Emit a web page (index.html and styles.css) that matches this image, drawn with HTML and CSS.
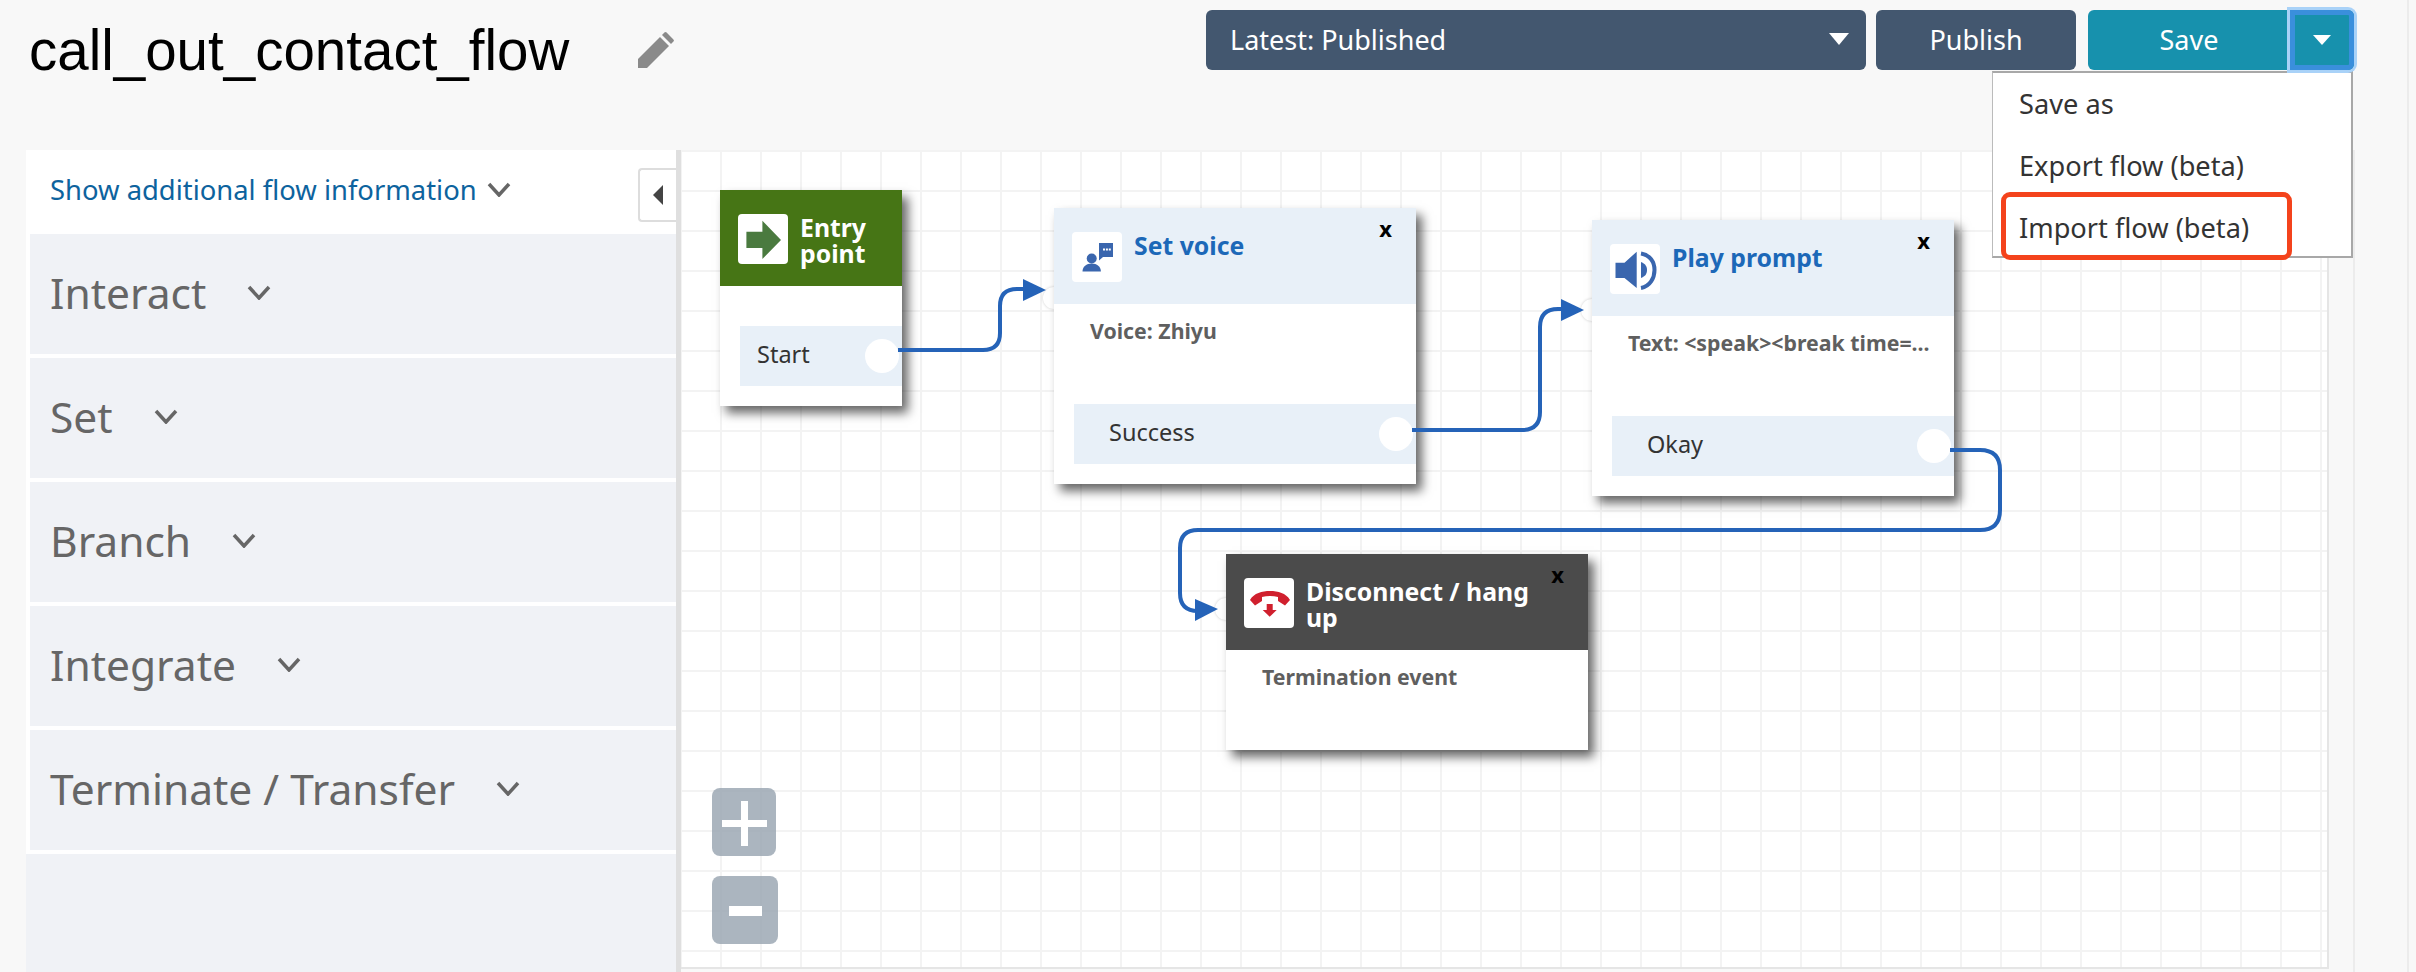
FILE: index.html
```html
<!DOCTYPE html>
<html lang="en">
<head>
    <meta charset="UTF-8">
    <title>call_out_contact_flow</title>
    <link rel="stylesheet" href="styles.css">
</head>
<body>
    <div class="page">
        <header class="topbar">
            <div class="flow-name">
                <h1>call_out_contact_flow</h1>
                <svg class="pencil" width="36" height="36" viewBox="0 0 36 36"><path d="M0 36V27L22 5l9 9L9 36z"/><path d="M24 3l2.400-2.400a1.600 1.600 0 0 1 2.200 0l6.800 6.800a1.600 1.600 0 0 1 0 2.200L33 12z"/></svg>
            </div>
            <div class="actions">
                <button class="btn btn-version"><span>Latest: Published</span><i class="caret"></i></button>
                <button class="btn btn-publish">Publish</button>
                <div class="save-group">
                    <button class="btn btn-save">Save</button>
                    <button class="btn btn-save-caret"><i class="caret caret-small"></i></button>
                    <ul class="save-menu">
                        <li>Save as</li>
                        <li>Export flow (beta)</li>
                        <li class="marked">Import flow (beta)</li>
                    </ul>
                </div>
            </div>
        </header>

        <main class="workspace">
            <aside class="sidebar">
                <div class="info-row">
                    <a class="info-link">Show additional flow information</a>
                    <svg class="chevron" width="24" height="15" viewBox="0 0 24 15"><path d="M2 2l10 11L22 2"/></svg>
                    <button class="collapse"><i></i></button>
                </div>
                <div class="group"><span>Interact</span><svg class="chevron" width="24" height="15" viewBox="0 0 24 15"><path d="M2 2l10 11L22 2"/></svg></div>
                <div class="group"><span>Set</span><svg class="chevron" width="24" height="15" viewBox="0 0 24 15"><path d="M2 2l10 11L22 2"/></svg></div>
                <div class="group"><span>Branch</span><svg class="chevron" width="24" height="15" viewBox="0 0 24 15"><path d="M2 2l10 11L22 2"/></svg></div>
                <div class="group"><span>Integrate</span><svg class="chevron" width="24" height="15" viewBox="0 0 24 15"><path d="M2 2l10 11L22 2"/></svg></div>
                <div class="group"><span>Terminate / Transfer</span><svg class="chevron" width="24" height="15" viewBox="0 0 24 15"><path d="M2 2l10 11L22 2"/></svg></div>
            </aside>

            <section class="canvas">
                <!-- entry point -->
                <div class="node node-entry">
                    <div class="node-head head-green">
                        <div class="node-icon">
                            <svg width="50" height="50" viewBox="0 0 50 50"><path fill="#4a7a3f" d="M8.400 17.700h16v-11L43 26 24.400 45V34h-16z"/></svg>
                        </div>
                        <div class="node-title">Entry point</div>
                    </div>
                    <div class="entry-body">
                        <div class="branch branch-start">Start<i class="port"></i></div>
                    </div>
                </div>

                <!-- set voice -->
                <div class="node node-voice">
                    <i class="port-in"></i>
                    <span class="node-close">x</span>
                    <div class="node-head">
                        <div class="node-icon">
                            <svg width="50" height="50" viewBox="0 0 50 50" fill="#3a66ae"><circle cx="19.700" cy="26.500" r="5"/><path d="M10.500 39.500c0-5 4-8 9.200-8s9.200 3 9.200 8z"/><path d="M27 11h14v14H31l-4 3.500z"/><path fill="#fff" d="M31 16.500h2v2h-2zM33.900 16.500h2v2h-2zM36.800 16.500h2v2h-2z"/></svg>
                        </div>
                        <div class="node-title">Set voice</div>
                    </div>
                    <div class="node-text">Voice: Zhiyu</div>
                    <div class="branch">Success<i class="port"></i></div>
                </div>

                <!-- play prompt -->
                <div class="node node-prompt">
                    <i class="port-in"></i>
                    <span class="node-close">x</span>
                    <div class="node-head">
                        <div class="node-icon">
                            <svg width="50" height="50" viewBox="0 0 50 50" fill="#3a66ae"><path d="M5.500 18.700h9L26.700 7.700V44L14.500 34h-9z"/><path d="M31 18c5 2 6 5 6 8s-1 6-6 8z"/><path fill="none" stroke="#3a66ae" stroke-width="4" d="M31 9.500c9 1.500 13.500 8.500 13.500 16.500S40 42.500 31 44"/></svg>
                        </div>
                        <div class="node-title">Play prompt</div>
                    </div>
                    <div class="node-text">Text: &lt;speak&gt;&lt;break time=...</div>
                    <div class="branch">Okay<i class="port"></i></div>
                </div>

                <!-- disconnect -->
                <div class="node node-end">
                    <i class="port-in"></i>
                    <span class="node-close">x</span>
                    <div class="node-head head-dark">
                        <div class="node-icon">
                            <svg width="50" height="50" viewBox="0 0 50 50" fill="#d0202e"><path d="M6 22c4-7 12-9 20-9s16 2 20 9l-5 5.500-7-4.500v-4c-5-1.500-11-1.500-16 0v4l-7 4.500z"/><path d="M22.700 26h6v6h4l-7 6.700-7-6.700h4z"/></svg>
                        </div>
                        <div class="node-title">Disconnect / hang up</div>
                    </div>
                    <div class="node-text">Termination event</div>
                </div>

                <svg class="wires" width="1648" height="817" viewBox="681 150 1648 817">
                    <g fill="none" stroke="#2563b8" stroke-width="4">
                        <path d="M898 350h85q17 0 17-17v-27q0-17 17-17h8"/>
                        <path d="M1412 430h110q18 0 18-18v-85q0-18 18-18h5"/>
                        <path d="M1950 450h30q20 0 20 20v40q0 20-20 20H1198q-18 0-18 18v45q0 18 18 18h2"/>
                    </g>
                    <g fill="#2563b8">
                        <path d="M1023 279l23 11-23 11z"/>
                        <path d="M1561 299l23 11-23 11z"/>
                        <path d="M1195 599l23 10-23 12z"/>
                    </g>
                </svg>

                <div class="zoom-tools">
                    <button class="zoom-btn zoom-in"></button>
                    <button class="zoom-btn zoom-out"></button>
                </div>
            </section>

            <div class="gutter"></div>
        </main>
    </div>
</body>
</html>
```

FILE: styles.css
```css
* {
    box-sizing: border-box;
}
html, body {
    margin: 0;
    height: 100%;
    overflow: hidden;
}
body {
    background-color: #f8f8f8;
    font-family: "Noto Sans", sans-serif;
}
.page {
    width: 2409px;
    height: 972px;
    border-right: 2px solid #ececec;
}

/* top bar */
.topbar {
    height: 150px;
    display: flex;
    justify-content: space-between;
    align-items: flex-start;
    padding-left: 29px;
}
.flow-name {
    display: flex;
    align-items: flex-start;
    gap: 69px;
    padding-top: 18px;
}
.flow-name h1 {
    margin: 0;
    font-family: "Liberation Sans", Arial, sans-serif;
    font-size: 56.500px;
    font-weight: 400;
    line-height: 66px;
    color: #000;
}
.pencil {
    margin-top: 14px;
    fill: #8a8a8a;
}
.actions {
    display: flex;
    margin-top: 10px;
    margin-right: 53px;
}
.btn {
    height: 60px;
    border: none;
    border-radius: 6px;
    color: #fff;
    font-family: inherit;
    font-size: 27px;
    padding: 0 0 2px;
}
.btn-version {
    width: 660px;
    background-color: #43576f;
    display: flex;
    justify-content: space-between;
    align-items: center;
    padding: 0 17px 2px 24px;
}
.btn-publish {
    width: 200px;
    margin-left: 10px;
    background-color: #43576f;
}
.caret {
    display: block;
    width: 0;
    height: 0;
    border-left: 10px solid transparent;
    border-right: 10px solid transparent;
    border-top: 12px solid #fff;
}
.caret-small {
    margin: 2px auto 0;
    border-left-width: 9px;
    border-right-width: 9px;
    border-top-width: 10px;
}
.save-group {
    position: relative;
    display: flex;
    margin-left: 12px;
}
.btn-save {
    width: 202px;
    background-color: #1791ad;
    border-radius: 6px 0 0 6px;
}
.btn-save-caret {
    position: relative;
    z-index: 6;
    width: 64px;
    background-color: #1791ad;
    border-radius: 0 6px 6px 0;
    box-shadow: inset 0 0 0 5px #3a8fdc, 0 0 0 3px #a9d2f8;
}
.save-menu {
    position: absolute;
    z-index: 5;
    top: 61px;
    right: 1px;
    width: 361px;
    height: 187px;
    margin: 0;
    padding: 0;
    list-style: none;
    background-color: #fff;
    border-top: 2px solid #a8a8a8;
    border-right: 2px solid #a8a8a8;
    border-bottom: 2px solid #a8a8a8;
    border-left: 1px solid #bbb;
}
.save-menu li {
    height: 62px;
    line-height: 62px;
    padding-left: 26px;
    font-size: 27.200px;
    color: #333;
}
.save-menu .marked {
    position: relative;
}
.save-menu .marked::after {
    content: "";
    box-sizing: border-box;
    position: absolute;
    left: 8px;
    top: -5px;
    width: 291px;
    height: 68px;
    border: 5px solid #f4431c;
    border-radius: 9px;
}

/* sidebar */
.workspace {
    display: flex;
    height: 817px;
}
.sidebar {
    flex: none;
    position: relative;
    margin-left: 26px;
    width: 655px;
    height: 822px;
    background-color: #f0f2f6;
    border-right: 5px solid #dfdfdf;
}
.info-row {
    height: 84px;
    display: flex;
    align-items: center;
    gap: 10px;
    padding: 0 0 6px 24px;
    background-color: #fff;
}
.info-link {
    color: #0d639e;
    font-size: 27.400px;
}
.chevron {
    flex: none;
    fill: none;
    stroke: #666;
    stroke-width: 3.500;
}
.collapse {
    position: absolute;
    top: 18px;
    right: 0;
    width: 38px;
    height: 54px;
    padding: 0;
    background-color: #fff;
    border: 2px solid #ddd;
    border-right: none;
    border-radius: 4px 0 0 4px;
}
.collapse i {
    display: block;
    width: 0;
    height: 0;
    margin-left: 13px;
    border-top: 10px solid transparent;
    border-bottom: 10px solid transparent;
    border-right: 10px solid #444;
}
.group {
    height: 124px;
    display: flex;
    align-items: center;
    gap: 41px;
    padding: 0 0 4px 20px;
    border-left: 4px solid #fff;
    border-bottom: 4px solid #fff;
    color: #666;
    font-size: 42.500px;
}

/* canvas */
.canvas {
    flex: none;
    position: relative;
    isolation: isolate;
    width: 1648px;
    height: 819px;
    background-color: #fff;
    background-image:
        linear-gradient(to right, #f3f3f3 2px, transparent 2px),
        linear-gradient(to bottom, #f3f3f3 2px, transparent 2px);
    background-size: 40px 40px;
    background-position: 39px 0;
    border-right: 2px solid #e5e5e5;
    border-bottom: 2px solid #e5e5e5;
}
.wires {
    position: absolute;
    left: 0;
    top: 0;
    z-index: 2;
    pointer-events: none;
}
.node {
    position: absolute;
    width: 362px;
    background-color: #fff;
    box-shadow: 6px 7px 10px rgba(0, 0, 0, 0.6);
}
.node-entry {
    left: 39px;
    top: 40px;
    width: 182px;
    height: 216px;
}
.node-voice {
    left: 373px;
    top: 58px;
    height: 276px;
}
.node-prompt {
    left: 911px;
    top: 70px;
    height: 276px;
}
.node-end {
    left: 545px;
    top: 404px;
    height: 196px;
}
.node-end .node-title {
    width: 235px;
}
.node-head {
    height: 96px;
    display: flex;
    align-items: flex-start;
    gap: 12px;
    padding: 24px 18px 0;
    background-color: #e8f0f8;
}
.head-green {
    background-color: #467515;
}
.head-dark {
    background-color: #4b4b4b;
}
.node-icon {
    flex: none;
    width: 50px;
    height: 50px;
    background-color: #fff;
    border-radius: 4px;
}
.node-icon svg {
    display: block;
}
.node-title {
    color: #1c68b8;
    font-size: 24.800px;
    font-weight: 700;
    line-height: 26px;
}
.head-green .node-title,
.head-dark .node-title {
    color: #fff;
}
.node-close {
    position: absolute;
    top: 6px;
    right: 24px;
    color: #000;
    font-size: 22px;
    font-weight: 700;
    line-height: 28px;
}
.node-text {
    height: 100px;
    padding: 14px 0 0 36px;
    color: #5f5f5f;
    font-size: 21.300px;
    font-weight: 700;
    line-height: 26px;
}
.branch {
    position: relative;
    height: 60px;
    margin-left: 20px;
    padding-left: 35px;
    background-color: #e8f0f8;
    color: #333;
    font-size: 23.500px;
    line-height: 56px;
}
.entry-body {
    padding-top: 40px;
}
.branch-start {
    padding-left: 17px;
}
.port {
    position: absolute;
    right: 3px;
    top: 13px;
    width: 34px;
    height: 34px;
    border-radius: 50%;
    background-color: #fff;
}
.port-in {
    position: absolute;
    z-index: -1;
    left: -11px;
    top: 79px;
    width: 22px;
    height: 22px;
    border-radius: 50%;
    background-color: #fff;
    box-shadow: 0 0 3px rgba(0, 0, 0, 0.2);
}
.node-end .port-in {
    top: 44px;
}

/* zoom buttons on the canvas */
.zoom-tools {
    position: absolute;
    left: 31px;
    top: 638px;
    z-index: 3;
    display: flex;
    flex-direction: column;
    gap: 20px;
}
.zoom-btn {
    position: relative;
    display: block;
    height: 68px;
    padding: 0;
    border: none;
    border-radius: 8px;
    background-color: rgba(152, 165, 177, 0.82);
}
.zoom-in {
    width: 64px;
}
.zoom-out {
    width: 66px;
}
.zoom-in::before,
.zoom-in::after,
.zoom-out::before {
    content: "";
    position: absolute;
    background-color: #fff;
}
.zoom-in::before {
    left: 10px;
    top: 32px;
    width: 45px;
    height: 7px;
}
.zoom-in::after {
    left: 29px;
    top: 13px;
    width: 7px;
    height: 45px;
}
.zoom-out::before {
    left: 17px;
    top: 30px;
    width: 33px;
    height: 10px;
}

.gutter {
    flex: none;
    width: 26px;
    height: 822px;
    border-right: 2px solid #ececec;
}
```
